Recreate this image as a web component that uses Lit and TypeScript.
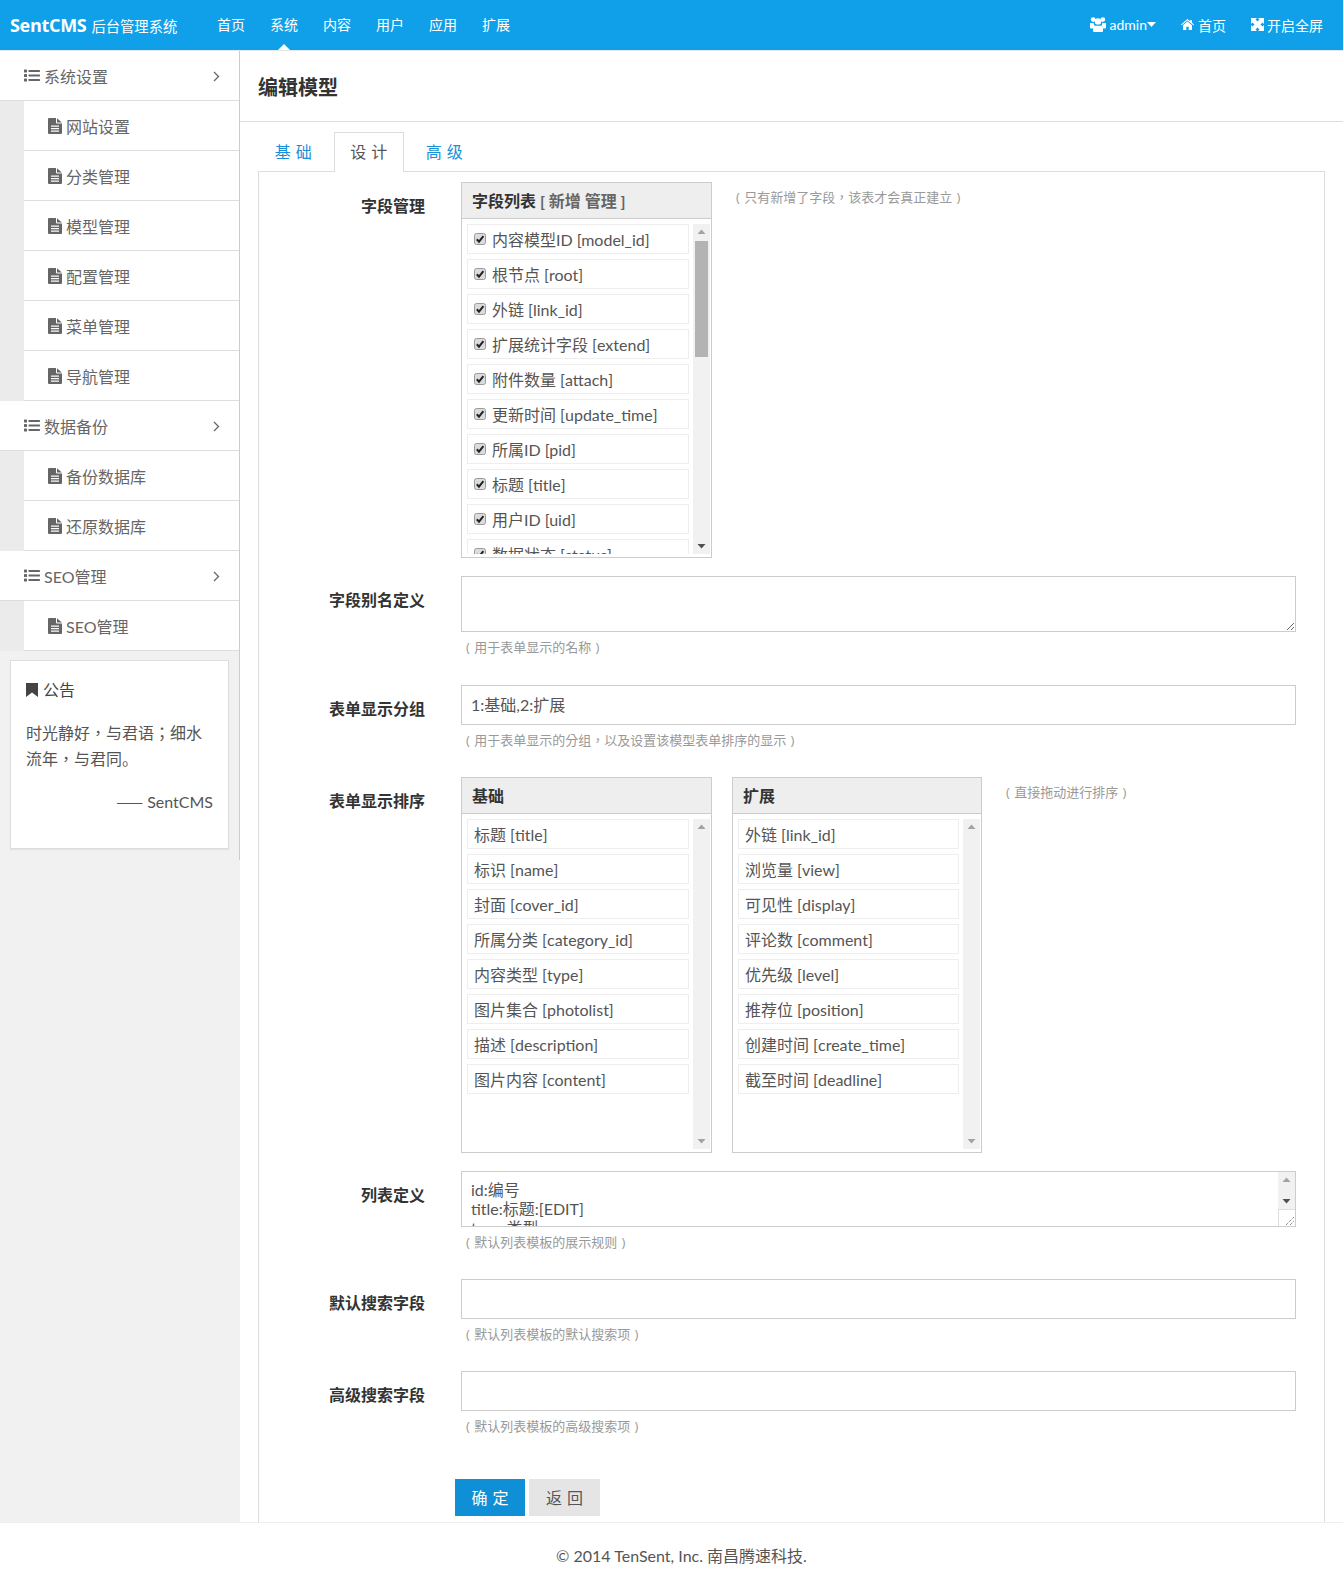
import { LitElement, html, css } from "lit";
import { customElement } from "lit/decorators.js";

const iList = html`<svg class="i-list" viewBox="0 0 16 13" width="16" height="13"><g fill="currentColor"><rect x="0" y="0.5" width="3" height="3" rx=".6"/><rect x="0" y="5" width="3" height="3" rx=".6"/><rect x="0" y="9.5" width="3" height="3" rx=".6"/><rect x="4.500" y="1" width="11.500" height="2" rx=".4"/><rect x="4.500" y="5.500" width="11.500" height="2" rx=".4"/><rect x="4.500" y="10" width="11.500" height="2" rx=".4"/></g></svg>`;
const iFile = html`<svg class="i-file" viewBox="0 0 14 16" width="14" height="16"><path fill="currentColor" fill-rule="evenodd" d="M0 1a1 1 0 0 1 1-1h7v4.600a.9.9 0 0 0 .9.9H14V15a1 1 0 0 1-1 1H1a1 1 0 0 1-1-1zM3 7.500v1.300h8V7.500zM3 10v1.300h8V10zM3 12.500v1.300h8v-1.300z"/><path fill="currentColor" d="M9 .2 13.800 4.500H9z"/></svg>`;
const iChevron = html`<svg class="i-chev" viewBox="0 0 7 11" width="7" height="11"><path d="M1 1l4.500 4.500L1 10" fill="none" stroke="currentColor" stroke-width="1.300"/></svg>`;
const iBookmark = html`<svg class="i-book" viewBox="0 0 12 14" width="12" height="14"><path fill="currentColor" d="M0 0h12v14L6 9.600 0 14z"/></svg>`;
const iUsers = html`<svg viewBox="0 0 16 15" width="16" height="15"><g fill="#fff"><circle cx="3.200" cy="2.600" r="2.400"/><circle cx="12.800" cy="2.600" r="2.400"/><circle cx="8" cy="4.400" r="3.200"/><path d="M0 6h3.700a4.500 4.500 0 0 0 1 3 5 5 0 0 0-2 2.600H1a1 1 0 0 1-1-1zM16 6h-3.700a4.500 4.500 0 0 1-1 3 5 5 0 0 1 2 2.600H15a1 1 0 0 0 1-1zM5 8.800h6a2.600 2.600 0 0 1 2 2.500V14a1 1 0 0 1-1 1H4a1 1 0 0 1-1-1v-2.700a2.600 2.600 0 0 1 2-2.500z"/></g></svg>`;
const iHome = html`<svg viewBox="0 0 13 11" width="13" height="11"><path fill="#fff" d="M6.500 0 0 5.400l.6.800L6.500 1.400l5.900 4.800.6-.8-2-1.700V1H9.300v1.300zM2 6.300V11h3.300V7.800h2.400V11H11V6.300L6.500 2.600z"/></svg>`;
const iExpand = html`<svg viewBox="0 0 13 13" width="13" height="13"><path fill="#fff" d="M0 0h6L4.500 1.500 6.500 3.500 8.500 1.500 7 0h6v6L11.500 4.500 9.500 6.500l2 2L13 7v6H7l1.500-1.500-2-2-2 2L6 13H0V7l1.500 1.500 2-2-2-2L0 6z"/></svg>`;
const iCaret = html`<svg class="caret" viewBox="0 0 9 5" width="9" height="5"><path fill="#fff" d="M0 0h9L4.500 5z"/></svg>`;
const iCheck = html`<svg viewBox="0 0 12 12" width="12" height="12"><rect x=".5" y=".5" width="11" height="11" rx="2" fill="#dcdcdc" stroke="#9a9a9a"/><path d="M2.800 6.200 5 8.600 9.400 3.200" fill="none" stroke="#222" stroke-width="2"/></svg>`;
const arrow = (up: boolean, dark: boolean) => html`<svg class="arr" viewBox="0 0 17 17" width="17" height="17"><path fill="${dark ? "#505050" : "#a3a3a3"}" d="${up ? "M8.500 5.500 12.500 10h-8z" : "M4.500 7h8l-4 4.500z"}"/></svg>`;

const SIDE = [
  { t: "系统设置", c: ["网站设置", "分类管理", "模型管理", "配置管理", "菜单管理", "导航管理"] },
  { t: "数据备份", c: ["备份数据库", "还原数据库"] },
  { t: "SEO管理", c: ["SEO管理"] },
];
const FIELDS = ["内容模型ID [model_id]", "根节点 [root]", "外链 [link_id]", "扩展统计字段 [extend]", "附件数量 [attach]", "更新时间 [update_time]", "所属ID [pid]", "标题 [title]", "用户ID [uid]", "数据状态 [status]"];
const BASE = ["标题 [title]", "标识 [name]", "封面 [cover_id]", "所属分类 [category_id]", "内容类型 [type]", "图片集合 [photolist]", "描述 [description]", "图片内容 [content]"];
const EXT = ["外链 [link_id]", "浏览量 [view]", "可见性 [display]", "评论数 [comment]", "优先级 [level]", "推荐位 [position]", "创建时间 [create_time]", "截至时间 [deadline]"];

@customElement("app-root")
export class AppRoot extends LitElement {
  static styles = css`
    :host { display: block; font-family: "Lato", "Noto Sans CJK SC", sans-serif; font-size: 16px; color: #555; background: #fff; }
    * { box-sizing: border-box; }
    a { color: inherit; text-decoration: none; }
    .top { height: 51px; background: #10a0ea; border-bottom: 1px solid #e5e5e5; display: flex; align-items: center; color: #fff; padding: 0 20px 1px 10px; }
    .logo { width: 207px; display: flex; align-items: baseline; gap: 5px; flex: none; }
    .logo b { font-family: "Open Sans", sans-serif; font-size: 18px; font-weight: 700; letter-spacing: -.3px; }
    .logo span { font-size: 14.300px; }
    .nav { display: flex; gap: 25px; font-size: 14px; }
    .nav a { position: relative; line-height: 50px; }
    .nav a.on::after { content: ""; position: absolute; left: 8px; bottom: 0; border: 6px solid transparent; border-top: 0; border-bottom-color: #fff; }
    .tools { margin-left: auto; display: flex; gap: 25px; font-size: 14px; }
    .tools a { display: flex; align-items: center; gap: 4px; }
    .tools a.full { gap: 3px; }
    .caret { margin-left: -4px; }
    .wrap { display: flex; }
    .side { width: 240px; flex: none; background: #f1f1f1; }
    .side-in { border-right: 1px solid #ccc; height: 809px; }
    .row { height: 50px; border-bottom: 1px solid #ddd; background: #fff; display: flex; align-items: center; color: #666; padding-left: 24px; gap: 4px; }
    .row .i-chev { margin: 1px 19px 0 auto; }
    .subwrap { background: #ebebeb; padding-left: 24px; }
    .row.sub { padding-left: 24px; gap: 4px; }
    .card { margin: 9px 10px 0; height: 189px; width: 219px; background: #fff; border: 1px solid #ddd; box-shadow: 0 1px 1px rgba(0,0,0,.05); padding: 15px; line-height: 25px; }
    .card h4 { margin: 1px 0 18px; font-weight: 400; font-size: 16px; display: flex; align-items: center; gap: 5px; color: #444; height: 25px; }
    .card p { margin: 0; height: 50px; line-height: 25.500px; font-family: "Lato", "Noto Sans CJK TC", sans-serif; }
    .card .sc { font-family: "Noto Sans CJK SC", sans-serif; }
    .card .sign { text-align: right; margin-top: 19px; color: #555; }
    .main { flex: 1; min-width: 0; }
    .head { height: 71px; border-bottom: 1px solid #ddd; padding: 0 18px; display: flex; align-items: center; }
    .head h2 { margin: 0; font-size: 20px; font-weight: 700; color: #333; }
    .body { padding: 10px 18px 0; }
    .tabs { display: flex; gap: 5px; position: relative; margin-bottom: -1px; }
    .tab { height: 40px; width: 70.500px; text-align: center; line-height: 38px; color: #1a8fd8; border: 1px solid transparent; border-bottom: 0; word-spacing: 1px; }
    .tab.on { color: #555; border-color: #ddd; background: #fff; }
    .pane { border: 1px solid #ddd; border-bottom: 0; padding: 10px 28px 6px 0; }
    .f { display: grid; grid-template-columns: 166px 1fr; column-gap: 36px; margin-bottom: 22px; }
    .f.t18 { margin-bottom: 18px; }
    .f.t23 { margin-bottom: 23px; }
    .f.last { margin-bottom: 0; }
    .lab { text-align: right; font-weight: 700; color: #333; padding-top: 12px; line-height: 24px; }
    .hint { font-size: 13px; color: #999; line-height: 30px; height: 30px; padding-left: 5px; word-spacing: 1px; font-family: "Open Sans", "Noto Sans CJK TC", sans-serif; }
    .flexr { display: flex; align-items: flex-start; }
    .flexr .hint { margin-left: 19px; }
    .gap20 { margin-left: 20px; }
    .panel { border: 1px solid #ccc; display: flex; flex-direction: column; flex: none; }
    .panel header { height: 36px; flex: none; background: #eee; border-bottom: 1px solid #ccc; padding-left: 10px; line-height: 36px; font-weight: 700; color: #333; }
    .panel header span { color: #666; }
    .pbody { flex: 1; min-height: 0; display: flex; padding: 5px 1px 3px 5px; gap: 4px; }
    .items { flex: 1; min-width: 0; overflow: hidden; }
    .item { height: 30px; border: 1px solid #eee; margin-bottom: 5px; line-height: 26px; padding: 2px 0 0 6px; display: flex; align-items: center; gap: 6px; white-space: nowrap; overflow: hidden; }
    .bar { width: 17px; flex: none; background: #f1f1f1; display: flex; flex-direction: column; justify-content: space-between; position: relative; }
    .arr { display: block; }
    .thumb { position: absolute; left: 2px; right: 2px; top: 17px; height: 116px; background: #b3b3b3; }
    input, textarea { display: block; width: 100%; border: 1px solid #ccc; border-radius: 0; outline: 0; background: #fff; font: inherit; color: #555; padding: 0 9px; margin: 0; }
    input { height: 40px; padding-bottom: 2px; }
    textarea { height: 56px; padding: 8px 9px; line-height: 19px; resize: both; overflow: hidden; }
    .tawrap { position: relative; height: 56px; }
    .tawrap textarea { resize: none; }
    .tabar { position: absolute; right: 1px; top: 1px; width: 17px; height: 37px; background: #f1f1f1; display: flex; flex-direction: column; justify-content: space-between; }
    .corner { position: absolute; right: 1px; bottom: 1px; width: 17px; height: 17px; background: #fff; border: 1px solid #ddd; border-right: 0; border-bottom: 0; }
    .corner svg { display: block; }
    .acts { padding: 38px 0 0 196px; display: flex; gap: 4px; }
    .btn { height: 37px; line-height: 38px; text-align: center; font-size: 16px; word-spacing: 1px; }
    .btn.pri { background: #0f8fd5; color: #fff; width: 70px; }
    .btn.def { background: #e5e5e5; color: #555; width: 71px; }
    .foot { height: 64px; border-top: 1px solid #eee; padding: 18px 0 0 20px; text-align: center; line-height: 30px; color: #555; }
    .check { flex: none; display: block; margin-top: -3px; }
  `;

  private panel(width: number, height: number, title: unknown, items: string[], checked: boolean) {
    return html`<div class="panel" style="width:${width}px;height:${height}px">
      <header>${title}</header>
      <div class="pbody">
        <div class="items">${items.map((t) => html`<div class="item">${checked ? html`<span class="check">${iCheck}</span>` : ""}${t}</div>`)}</div>
        <div class="bar">${arrow(true, false)}${checked ? html`<div class="thumb"></div>` : ""}${arrow(false, checked)}</div>
      </div>
    </div>`;
  }

  render() {
    return html`
      <div class="top">
        <div class="logo"><b>SentCMS</b><span>后台管理系统</span></div>
        <nav class="nav">
          <a>首页</a><a class="on">系统</a><a>内容</a><a>用户</a><a>应用</a><a>扩展</a>
        </nav>
        <div class="tools">
          <a>${iUsers}admin${iCaret}</a>
          <a>${iHome}首页</a>
          <a class="full">${iExpand}开启全屏</a>
        </div>
      </div>
      <div class="wrap">
        <aside class="side">
          <div class="side-in">
            ${SIDE.map((s) => html`
              <div class="row">${iList}<span>${s.t}</span>${iChevron}</div>
              <div class="subwrap">${s.c.map((c) => html`<div class="row sub">${iFile}<span>${c}</span></div>`)}</div>
            `)}
            <div class="card">
              <h4>${iBookmark}公告</h4>
              <p>时光静好，与君语；细水流年，与君同<span class="sc">。</span></p>
              <div class="sign"><span class="sc">——</span> SentCMS</div>
            </div>
          </div>
        </aside>
        <main class="main">
          <div class="head"><h2>编辑模型</h2></div>
          <div class="body">
            <div class="tabs">
              <a class="tab">基 础</a><a class="tab on">设 计</a><a class="tab">高 级</a>
            </div>
            <div class="pane">
              <div class="f t18">
                <div class="lab">字段管理</div>
                <div class="flexr">
                  ${this.panel(251, 376, html`字段列表 <span>[ 新增 管理 ]</span>`, FIELDS, true)}
                  <div class="hint">( 只有新增了字段，该表才会真正建立 )</div>
                </div>
              </div>
              <div class="f t23">
                <div class="lab">字段别名定义</div>
                <div><textarea></textarea><div class="hint">( 用于表单显示的名称 )</div></div>
              </div>
              <div class="f">
                <div class="lab">表单显示分组</div>
                <div><input value="1:基础,2:扩展" /><div class="hint">( 用于表单显示的分组，以及设置该模型表单排序的显示 )</div></div>
              </div>
              <div class="f t18">
                <div class="lab">表单显示排序</div>
                <div class="flexr">
                  ${this.panel(251, 376, "基础", BASE, false)}
                  <div class="gap20">${this.panel(250, 376, "扩展", EXT, false)}</div>
                  <div class="hint">( 直接拖动进行排序 )</div>
                </div>
              </div>
              <div class="f">
                <div class="lab">列表定义</div>
                <div>
                  <div class="tawrap">
                    <textarea .value=${"id:编号\ntitle:标题:[EDIT]\ntype:类型\nupdate_time:最后更新\nstatus:状态"}></textarea>
                    <div class="tabar">${arrow(true, false)}${arrow(false, true)}</div>
                    <div class="corner"><svg viewBox="0 0 16 16" width="16" height="16"><path d="M7 15 15 7M11 15l4-4" stroke="#555" stroke-width="1" stroke-dasharray="1 1" fill="none"/></svg></div>
                  </div>
                  <div class="hint">( 默认列表模板的展示规则 )</div>
                </div>
              </div>
              <div class="f">
                <div class="lab">默认搜索字段</div>
                <div><input /><div class="hint">( 默认列表模板的默认搜索项 )</div></div>
              </div>
              <div class="f last">
                <div class="lab">高级搜索字段</div>
                <div><input /><div class="hint">( 默认列表模板的高级搜索项 )</div></div>
              </div>
              <div class="acts"><a class="btn pri">确 定</a><a class="btn def">返 回</a></div>
            </div>
          </div>
        </main>
      </div>
      <footer class="foot">© 2014 TenSent, Inc. 南昌腾速科技.</footer>
    `;
  }
}
